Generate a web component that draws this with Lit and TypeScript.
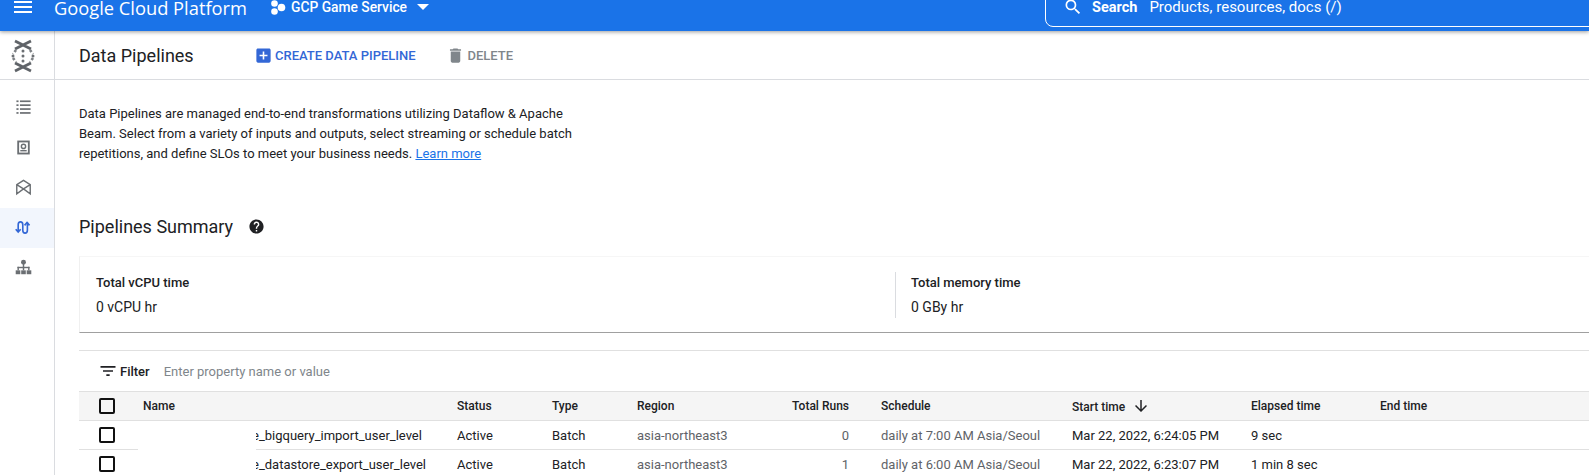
import { LitElement, css, html, svg } from 'lit';
import { customElement } from 'lit/decorators.js';

const icon = (d: string, size: number, cls = '') => html`
  <svg class=${cls} width=${size} height=${size} viewBox="0 0 24 24" fill="currentColor"><path d=${d}></path></svg>
`;

const MENU = 'M3 18h18v-2H3v2zm0-5h18v-2H3v2zm0-7v2h18V6H3z';
const SEARCH =
	'M15.5 14h-.79l-.28-.27A6.47 6.47 0 0 0 16 9.5 6.5 6.5 0 1 0 9.5 16c1.61 0 3.09-.59 4.23-1.57l.27.28v.79l5 4.99L20.49 19l-4.99-5zm-6 0C7.01 14 5 11.99 5 9.5S7.01 5 9.5 5 14 7.01 14 9.5 11.99 14 9.5 14z';
const ADD_BOX =
	'M19 3H5c-1.11 0-2 .9-2 2v14c0 1.1.89 2 2 2h14c1.1 0 2-.9 2-2V5c0-1.1-.9-2-2-2zm-2 10h-4v4h-2v-4H7v-2h4V7h2v4h4v2z';
const TRASH = 'M6 19c0 1.1.9 2 2 2h8c1.1 0 2-.9 2-2V7H6v12zM19 4h-3.5l-1-1h-5l-1 1H5v2h14V4z';
const HELP =
	'M12 2C6.48 2 2 6.48 2 12s4.48 10 10 10 10-4.48 10-10S17.52 2 12 2zm1 17h-2v-2h2v2zm2.07-7.75l-.9.92C13.45 12.9 13 13.5 13 15h-2v-.5c0-1.1.45-2.1 1.17-2.83l1.24-1.26c.37-.36.59-.86.59-1.41 0-1.1-.9-2-2-2s-2 .9-2 2H8c0-2.21 1.79-4 4-4s4 1.79 4 4c0 .88-.36 1.68-.93 2.25z';
const FILTER = 'M10 18h4v-2h-4v2zM3 6v2h18V6H3zm3 7h12v-2H6v2z';
const ARROW_DOWN = 'M20 12l-1.41-1.41L13 16.17V4h-2v12.17l-5.58-5.59L4 12l8 8 8-8z';

const rows = [
	{
		name: 'e_bigquery_import_user_level',
		runs: 0,
		schedule: 'daily at 7:00 AM Asia/Seoul',
		start: 'Mar 22, 2022, 6:24:05 PM',
		elapsed: '9 sec',
	},
	{
		name: 'e_datastore_export_user_level',
		runs: 1,
		schedule: 'daily at 6:00 AM Asia/Seoul',
		start: 'Mar 22, 2022, 6:23:07 PM',
		elapsed: '1 min 8 sec',
	},
];

const navIcons = [
	{
		active: false,
		body: svg`<g fill="#6b6f73"><rect x="2" y="2" width="3" height="2.4"/><rect x="7" y="2" width="15" height="2.4"/><rect x="2" y="7.500" width="3" height="2.4"/><rect x="7" y="7.500" width="15" height="2.4"/><rect x="2" y="13" width="3" height="2.4"/><rect x="7" y="13" width="15" height="2.4"/><rect x="2" y="18.500" width="3" height="2.4"/><rect x="7" y="18.500" width="15" height="2.4"/></g>`,
	},
	{
		active: false,
		body: svg`<g fill="none" stroke="#6b6f73"><rect x="4.500" y="3.500" width="15" height="17" stroke-width="2.600"/><circle cx="12" cy="10.500" r="3" stroke-width="2"/><path d="M7.500 16.500h9" stroke-width="2"/></g>`,
	},
	{
		active: false,
		body: svg`<path fill="none" stroke="#6b6f73" stroke-width="2" d="M2.500 21V8l9.500-6 9.500 6v13L12 14zM2.500 8l9.500 6 9.500-6"/>`,
	},
	{
		active: true,
		body: svg`<g fill="none" stroke="#3367d6" stroke-width="2.300"><path d="M1 14.500l3.500 4 3.500-4M4.500 18V8c0-2.500 1.200-4 3.200-4s3.300 1.500 3.300 4v8c0 2.500 1.200 4 3.200 4s3.300-1.500 3.300-4V5"/><path d="M13.500 9L17 5l3.500 4"/></g>`,
	},
	{
		active: false,
		body: svg`<g fill="#6b6f73"><circle cx="12" cy="4.500" r="3.500"/><rect x="11" y="7" width="2" height="6"/><rect x="3.500" y="11" width="17" height="2"/><rect x="3.500" y="11" width="2" height="5"/><rect x="18.500" y="11" width="2" height="5"/><rect x="11" y="11" width="2" height="5"/><rect x="1" y="16" width="6.500" height="5.500"/><rect x="8.750" y="16" width="6.500" height="5.500"/><rect x="16.500" y="16" width="6.500" height="5.500"/></g>`,
	},
];

@customElement('app-root')
export class AppRoot extends LitElement {
	static styles = css`
    :host {
      display: block;
      height: 100vh;
      overflow: hidden;
      background: #ffffff;
      color: #202124;
      font-family: Roboto, 'Liberation Sans', sans-serif;
    }

    .topbar {
      position: relative;
      z-index: 2;
      height: 48px;
      margin-top: -17px;
      background: #1a73e8;
      color: #ffffff;
      display: flex;
      align-items: center;
      box-shadow: 0 1px 4px rgba(0, 0, 0, 0.4);
    }

    .menu {
      margin-left: 11px;
      display: flex;
    }

    .brand {
      margin-left: 19px;
      font-family: 'Open Sans', Roboto, sans-serif;
      font-size: 18.300px;
      white-space: nowrap;
      width: 217px;
    }

    .project {
      display: flex;
      align-items: center;
      font-size: 13.800px;
      font-weight: 500;
    }

    .project-dots {
      margin-right: 5px;
    }

    .caret {
      margin-left: 10px;
      width: 0;
      height: 0;
      border-left: 6px solid transparent;
      border-right: 6px solid transparent;
      border-top: 6px solid #ffffff;
    }

    .search {
      position: absolute;
      left: 1045px;
      right: -20px;
      bottom: 4px;
      height: 40px;
      box-sizing: border-box;
      border: 1px solid #ffffff;
      border-radius: 8px;
      display: flex;
      align-items: center;
      padding-left: 17px;
      font-size: 15px;
      white-space: nowrap;
    }

    .search b {
      font-size: 14.500px;
      font-weight: 700;
      margin: 0 12px 0 9px;
    }

    .layout {
      display: flex;
      height: calc(100vh - 31px);
    }

    .side {
      width: 54px;
      flex: none;
      border-right: 1px solid #dadce0;
    }

    .logo {
      height: 49px;
      display: flex;
      align-items: center;
      justify-content: center;
      padding-right: 8px;
      padding-top: 1px;
      box-sizing: border-box;
      border-bottom: 1px solid #dadce0;
    }

    .nav {
      padding-top: 7px;
    }

    .nav-item {
      height: 40.200px;
      display: flex;
      align-items: center;
      justify-content: center;
      padding-right: 8px;
    }

    .nav-item.active {
      background: #f2f6fd;
    }

    .main {
      flex: 1;
      min-width: 0;
    }

    .head {
      height: 49px;
      box-sizing: border-box;
      border-bottom: 1px solid #dadce0;
      display: flex;
      align-items: center;
      padding-left: 24px;
    }

    .head h1 {
      margin: 0;
      width: 175px;
      font-size: 18px;
      font-weight: 400;
    }

    .action {
      display: flex;
      align-items: center;
      gap: 2px;
      font-size: 13px;
      font-weight: 500;
    }

    .action.create {
      color: #3367d6;
      width: 191.500px;
    }

    .action.delete {
      gap: 3px;
      color: #80868b;
    }

    .content {
      padding-left: 24px;
    }

    .intro {
      margin: 24px 0 0;
      width: 510px;
      font-size: 13px;
      line-height: 20px;
    }

    .intro a {
      color: #1a73e8;
      text-decoration: underline;
    }

    .summary-title {
      margin-top: 50px;
      display: flex;
      align-items: center;
      gap: 15px;
      height: 24px;
    }

    .summary-title h2 {
      margin: 0;
      font-size: 18px;
      font-weight: 400;
    }

    .summary {
      margin-top: 18px;
      height: 77px;
      box-sizing: border-box;
      display: flex;
      align-items: center;
      border-top: 1px solid #f6f6f6;
      border-left: 1px solid #f0f0f0;
      border-bottom: 1px solid #a0a0a0;
    }

    .metric {
      padding-left: 16px;
      box-sizing: border-box;
    }

    .metric.first {
      width: 815px;
    }

    .metric.second {
      padding-left: 15px;
      border-left: 1px solid #dadce0;
      height: 46px;
      display: flex;
      flex-direction: column;
      justify-content: center;
    }

    .metric-label {
      font-size: 13px;
      font-weight: 500;
      line-height: 20px;
      padding-top: 1px;
    }

    .metric-value {
      margin-top: 4px;
      font-size: 14px;
      line-height: 20px;
    }

    .filter {
      margin-top: 17px;
      height: 41px;
      box-sizing: border-box;
      border-top: 1px solid #e0e0e0;
      display: flex;
      align-items: center;
      padding-left: 19px;
      font-size: 13px;
    }

    .filter strong {
      font-weight: 500;
      margin: 0 14px 0 2px;
    }

    .filter span {
      color: #80868b;
    }

    table {
      width: 100%;
      table-layout: fixed;
      border-collapse: collapse;
      font-size: 13px;
    }

    th {
      height: 28px;
      padding: 0;
      text-align: left;
      font-size: 12px;
      font-weight: 500;
      background: #f5f5f5;
      border-top: 1px solid #e0e0e0;
      border-bottom: 1px solid #e0e0e0;
    }

    td {
      height: 28px;
      padding: 0;
      border-bottom: 1px solid #e0e0e0;
      white-space: nowrap;
    }

    .check-cell {
      padding-left: 20px;
    }

    .check {
      display: block;
      width: 16px;
      height: 16px;
      box-sizing: border-box;
      border: 2px solid #111111;
      border-radius: 2px;
    }

    .num {
      text-align: right;
      padding-right: 32px;
    }

    .muted {
      color: #5f6368;
    }

    .name-cell {
      position: relative;
      padding-left: 109px;
    }

    .redact {
      position: absolute;
      left: -5px;
      top: 0;
      bottom: -1px;
      width: 118px;
      background: #ffffff;
    }

    .sort {
      vertical-align: -4px;
      margin-left: 4px;
    }
  `;

	private logo() {
		return html`
      <svg width="24" height="34" viewBox="0 0 24 34" fill="#6b6f73">
        <path stroke="#5f6368" stroke-width="2.800" d="M4 2l16 8M20 2L4 10M4 24l16 8M20 24L4 32"></path>
        <path fill="none" stroke="#7d8185" stroke-width="2.600" stroke-dasharray="2.500 2" d="M5 11l-3 4M19 11l3 4M2 19l3 4M22 19l-3 4"></path>
        <circle cx="12" cy="12" r="1.500"></circle>
        <circle cx="12" cy="17" r="1.500"></circle>
        <circle cx="12" cy="22" r="1.500"></circle>
        <circle cx="2" cy="17" r="1.500"></circle>
        <circle cx="22" cy="17" r="1.500"></circle>
      </svg>
    `;
	}

	render() {
		return html`
      <header class="topbar">
        <span class="menu">${icon(MENU, 24)}</span>
        <span class="brand">Google Cloud Platform</span>
        <div class="project">
          <svg class="project-dots" width="15" height="15" viewBox="0 0 15 15" fill="#ffffff">
            <circle cx="3.500" cy="3.500" r="3.300"></circle>
            <circle cx="10.500" cy="7.500" r="3.800"></circle>
            <circle cx="3.500" cy="11.500" r="3.300"></circle>
          </svg>
          GCP Game Service
          <span class="caret"></span>
        </div>
        <div class="search">
          ${icon(SEARCH, 20)}
          <b>Search</b>
          <span>Products, resources, docs (/)</span>
        </div>
      </header>

      <div class="layout">
        <aside class="side">
          <div class="logo">${this.logo()}</div>
          <nav class="nav">
            ${navIcons.map(
							(n) => html`
                <div class="nav-item ${n.active ? 'active' : ''}">
                  <svg width="17" height="17" viewBox="0 0 24 24">${n.body}</svg>
                </div>
              `,
						)}
          </nav>
        </aside>

        <main class="main">
          <div class="head">
            <h1>Data Pipelines</h1>
            <div class="action create">${icon(ADD_BOX, 19)}CREATE DATA PIPELINE</div>
            <div class="action delete">${icon(TRASH, 19)}DELETE</div>
          </div>

          <div class="content">
            <p class="intro">
              Data Pipelines are managed end-to-end transformations utilizing Dataflow &amp; Apache
              Beam. Select from a variety of inputs and outputs, select streaming or schedule batch
              repetitions, and define SLOs to meet your business needs. <a>Learn more</a>
            </p>

            <div class="summary-title">
              <h2>Pipelines Summary</h2>
              ${icon(HELP, 17)}
            </div>

            <div class="summary">
              <div class="metric first">
                <div class="metric-label">Total vCPU time</div>
                <div class="metric-value">0 vCPU hr</div>
              </div>
              <div class="metric second">
                <div class="metric-label">Total memory time</div>
                <div class="metric-value">0 GBy hr</div>
              </div>
            </div>

            <div class="filter">
              ${icon(FILTER, 20)}
              <strong>Filter</strong>
              <span>Enter property name or value</span>
            </div>

            <table>
              <colgroup>
                <col style="width:64px" />
                <col style="width:314px" />
                <col style="width:95px" />
                <col style="width:85px" />
                <col style="width:122px" />
                <col style="width:122px" />
                <col style="width:191px" />
                <col style="width:179px" />
                <col style="width:129px" />
                <col />
              </colgroup>
              <thead>
                <tr>
                  <th class="check-cell"><span class="check"></span></th>
                  <th>Name</th>
                  <th>Status</th>
                  <th>Type</th>
                  <th>Region</th>
                  <th class="num">Total Runs</th>
                  <th>Schedule</th>
                  <th>Start time ${icon(ARROW_DOWN, 18, 'sort')}</th>
                  <th>Elapsed time</th>
                  <th>End time</th>
                </tr>
              </thead>
              <tbody>
                ${rows.map(
									(r) => html`
                    <tr>
                      <td class="check-cell"><span class="check"></span></td>
                      <td class="name-cell"><span class="redact"></span>${r.name}</td>
                      <td>Active</td>
                      <td>Batch</td>
                      <td class="muted">asia-northeast3</td>
                      <td class="num muted">${r.runs}</td>
                      <td class="muted">${r.schedule}</td>
                      <td>${r.start}</td>
                      <td>${r.elapsed}</td>
                      <td></td>
                    </tr>
                  `,
								)}
              </tbody>
            </table>
          </div>
        </main>
      </div>
    `;
	}
}
